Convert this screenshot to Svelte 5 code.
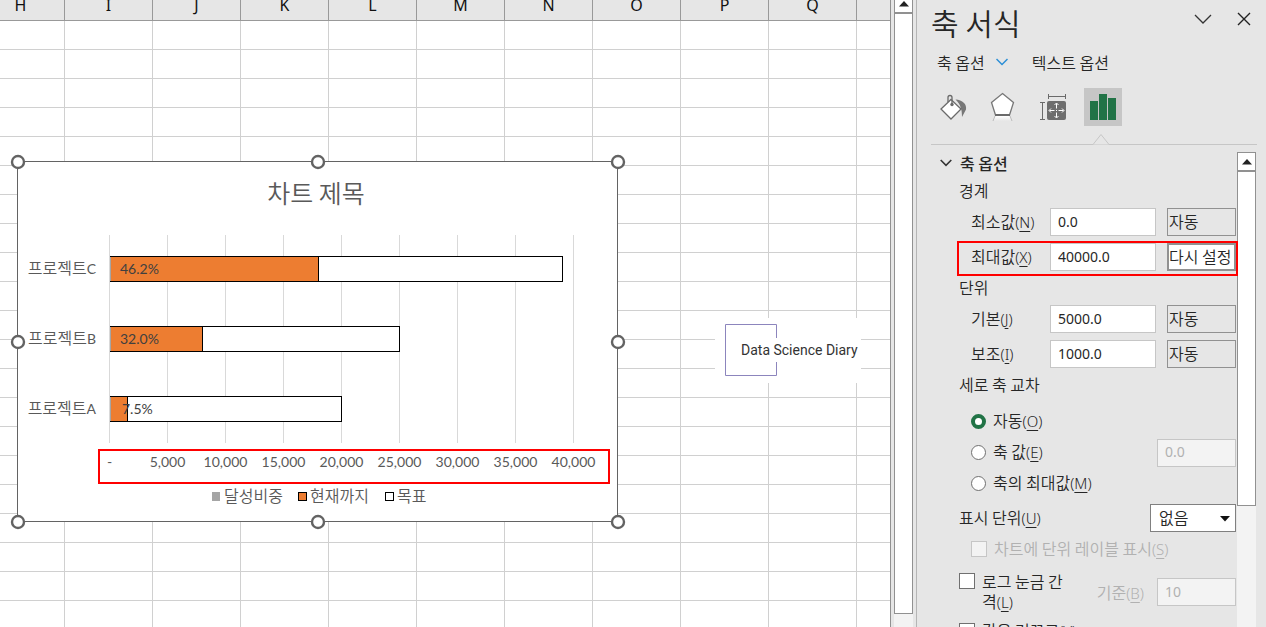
<script lang="ts">
  const columns = ['H', 'I', 'J', 'K', 'L', 'M', 'N', 'O', 'P', 'Q', 'R'];
  const rows = Array.from({ length: 24 }, (_, i) => i);

  // chart data
  const projects = [
    { name: 'C', goal: 39000, current: 18018, rate: '46.2%' },
    { name: 'B', goal: 25000, current: 8000, rate: '32.0%' },
    { name: 'A', goal: 20000, current: 1500, rate: '7.5%' },
  ];
  const ticks = [0, 5000, 10000, 15000, 20000, 25000, 30000, 35000, 40000];
  const handles = [[1, 1], [301, 1], [601, 1], [1, 181], [601, 181], [1, 361], [301, 361], [601, 361]];

  const scaleX = (value: number) => Math.round(92.2 + (value * 58) / 5000) + 0.5;

  let cross = $state('auto');
  let unit = $state('없음');
  let bounds = $state([
    { id: 'min', text: '최소값', key: 'N', value: '0.0', button: '자동' },
    { id: 'max', text: '최대값', key: 'X', value: '40000.0', button: '다시 설정' },
  ]);
  let units = $state([
    { id: 'major', text: '기본', key: 'J', value: '5000.0', button: '자동' },
    { id: 'minor', text: '보조', key: 'I', value: '1000.0', button: '자동' },
  ]);
</script>

{#snippet caption(text: string, key: string)}
  {text}<span class="key">(<u>{key}</u>)</span>
{/snippet}

{#snippet field(item)}
  <div class="field" class:marked={item.id === 'max'}>
    <label for={item.id}>{@render caption(item.text, item.key)}</label>
    <input class="box" id={item.id} type="text" bind:value={item.value}>
    <button class="reset" class:active={item.id === 'max'}>{item.button}</button>
  </div>
{/snippet}

{#snippet scrollUp()}
  <button class="scroll-up" aria-label="위로">
    <svg width="10" height="6" viewBox="0 0 10 6"><path d="M5 0L10 5.5H0z" fill="#222" /></svg>
  </button>
{/snippet}

<div class="app">
  <main class="sheet">
    <table>
      <thead>
        <tr>
          {#each columns as column}
            <th>{column}</th>
          {/each}
        </tr>
      </thead>
      <tbody>
        {#each rows as row (row)}
          <tr>
            {#each columns as column}
              <td></td>
            {/each}
          </tr>
        {/each}
      </tbody>
    </table>

    <svg class="chart" width="601" height="361" viewBox="0 0 601 361">
      <rect x="0.5" y="0.5" width="600" height="360" fill="#fff" stroke="#636363" />
      <text class="title" x="299" y="42">차트 제목</text>

      {#each ticks as tick}
        <path d="M{scaleX(tick)} 74V282" stroke="#d9d9d9" />
        <text class="tick" x={scaleX(tick)} y="306">{tick === 0 ? '-' : tick.toLocaleString('en-US')}</text>
      {/each}

      {#each projects as project, i}
        <text class="category" x="79" y={113 + i * 70}>프로젝트<tspan class="latin">{project.name}</tspan></text>
        <rect x="93.5" y={95.5 + i * 70} width={scaleX(project.goal) - 93.5} height="25" fill="#fff" stroke="#000" />
        <rect x="93.5" y={95.5 + i * 70} width={scaleX(project.current) - 93.5} height="25" fill="#ed7d31" stroke="#000" />
        <path d="M93.5 {96 + i * 70}v24" stroke="#a5a5a5" />
        <text class="rate" x={project.name === 'A' ? 105 : 103} y={113 + i * 70}>{project.rate}</text>
      {/each}

      <rect x="195" y="331" width="8" height="9" fill="#a5a5a5" />
      <text class="legend" x="207" y="341">달성비중</text>
      <rect x="281.5" y="331.5" width="8" height="8" fill="#ed7d31" stroke="#000" />
      <text class="legend" x="293" y="341">현재까지</text>
      <rect x="368.5" y="331.5" width="8" height="8" fill="#fff" stroke="#000" />
      <text class="legend" x="380" y="341">목표</text>

      <rect x="82" y="289" width="510" height="33" fill="none" stroke="#f00" stroke-width="2" />
      {#each handles as [x, y]}
        <circle cx={x} cy={y} r="6" fill="#fff" stroke="#636363" stroke-width="2.4" />
      {/each}
    </svg>

    <svg class="logo" width="146" height="65" viewBox="0 0 146 65">
      <rect width="146" height="65" fill="#fff" />
      <path d="M61.5 20V6.5H10.5V57.5H61.5V44" fill="none" stroke="#8c85bd" />
      <text x="26" y="37">Data Science Diary</text>
    </svg>
  </main>

  <div class="scrollbar sheet-scroll">
    {@render scrollUp()}
    <div class="thumb"></div>
  </div>

  <aside class="pane">
    <header>
      <h1>축 서식</h1>
      <button class="plain" aria-label="작업창 옵션">
        <svg width="18" height="10" viewBox="0 0 18 10"><path d="M1 1l8 8 8-8" fill="none" stroke="#333" stroke-width="1.3" /></svg>
      </button>
      <button class="plain" aria-label="닫기">
        <svg width="14" height="14" viewBox="0 0 14 14"><path d="M1 1l12 12M13 1L1 13" fill="none" stroke="#222" stroke-width="1.4" /></svg>
      </button>
    </header>

    <nav class="tabs">
      <button class="plain tab">
        축 옵션
        <svg width="12" height="8" viewBox="0 0 12 8"><path d="M0.5 1L6 6.5 11.5 1" fill="none" stroke="#2b8fd6" stroke-width="1.5" /></svg>
      </button>
      <button class="plain tab">텍스트 옵션</button>
    </nav>

    <div class="icons">
      <button class="plain icon" aria-label="채우기 및 선">
        <svg width="30" height="30" viewBox="0 0 30 30">
          <path d="M17.5 7.5C24.500 8 29 12 28 17.500L24 25C24 18 23 13 17.500 7.500z" fill="#777" />
          <path d="M13 7.500L23 17 13 27 3 17z" fill="#fff" stroke="#6a6a6a" stroke-width="1.3" />
          <path d="M10 10V5.500Q10 3.500 12 3.500T14 5.500V12" fill="none" stroke="#6a6a6a" stroke-width="1.3" />
          <circle cx="14" cy="12.500" r="1.700" fill="#6a6a6a" />
        </svg>
      </button>
      <button class="plain icon" aria-label="효과">
        <svg width="30" height="30" viewBox="0 0 30 30">
          <defs>
            <linearGradient id="fade" x1="0" y1="0" x2="0" y2="1">
              <stop offset="0" stop-color="#fff" />
              <stop offset="1" stop-color="#e6e6e6" />
            </linearGradient>
          </defs>
          <path d="M7 24h15l2 5H5z" fill="url(#fade)" />
          <path d="M7 24l-2 5M22 24l2 5" stroke="#bbb" />
          <path d="M14.500 1.500L25.500 10.500 21.500 23H7.500L3.500 10.500z" fill="#fff" stroke="#777" stroke-width="1.300" />
          <path d="M7 23h15" stroke="#6a6a6a" stroke-width="2" />
        </svg>
      </button>
      <button class="plain icon" aria-label="크기 및 속성">
        <svg width="30" height="30" viewBox="0 0 30 30">
          <path d="M10.500 2v5M27.500 2v5M10.500 4.500h17M2 10.500h5M2 27.500h5M4.500 10.500v17" fill="none" stroke="#6a6a6a" />
          <rect x="9" y="9" width="19" height="19" rx="2" fill="#6e6e6e" />
          <path d="M18.500 11.500v5M18.500 20.500v5M11.500 18.500h5M20.500 18.500h5M16.500 13l2-2 2 2M16.500 24l2 2 2-2M13 16.500l-2 2 2 2M24 16.500l2 2-2 2M18 18.500h1" fill="none" stroke="#fff" />
        </svg>
      </button>
      <button class="plain icon selected" aria-label="축 옵션">
        <svg width="26" height="26" viewBox="0 0 26 26" fill="#217346">
          <rect x="0" y="7" width="8" height="19" /><rect x="9" y="0" width="8" height="26" /><rect x="18" y="4" width="8" height="22" />
        </svg>
      </button>
    </div>

    <div class="divider">
      <svg width="18" height="12" viewBox="0 0 18 12"><path d="M0 11.500H1L9 1.500 17 11.500H18" fill="#e6e6e6" stroke="#c6c6c6" /></svg>
    </div>

    <div class="body">
      <section class="options">
        <h2>
          <svg width="12" height="8" viewBox="0 0 12 8"><path d="M0.700 1L6 6.300 11.300 1" fill="none" stroke="#333" stroke-width="1.600" /></svg>
          축 옵션
        </h2>

        <h3>경계</h3>
        <div class="fields">
          {#each bounds as item (item.id)}
            {@render field(item)}
          {/each}
        </div>

        <h3>단위</h3>
        <div class="fields">
          {#each units as item (item.id)}
            {@render field(item)}
          {/each}
        </div>

        <h3>세로 축 교차</h3>
        <div class="radios">
          <label class="choice">
            <input type="radio" name="cross" value="auto" bind:group={cross}>
            <span>{@render caption('자동', 'O')}</span>
          </label>
          <div class="split">
            <label class="choice">
              <input type="radio" name="cross" value="value" bind:group={cross}>
              <span>{@render caption('축 값', 'E')}</span>
            </label>
            <input class="box short" type="text" value="0.0" aria-label="축 값" disabled>
          </div>
          <label class="choice">
            <input type="radio" name="cross" value="max" bind:group={cross}>
            <span>{@render caption('축의 최대값', 'M')}</span>
          </label>
        </div>

        <div class="split unit">
          <label for="unit">{@render caption('표시 단위', 'U')}</label>
          <div class="select">
            <select id="unit" bind:value={unit}>
              <option>없음</option>
              <option>백</option>
              <option>천</option>
            </select>
            <svg width="10" height="6" viewBox="0 0 10 6"><path d="M0 0H10L5 5.500z" fill="#111" /></svg>
          </div>
        </div>
        <label class="choice unit-label">
          <input type="checkbox" disabled>
          <span>{@render caption('차트에 단위 레이블 표시', 'S')}</span>
        </label>

        <div class="split log">
          <label class="choice top">
            <input type="checkbox">
            <span>{@render caption('로그 눈금 간격', 'L')}</span>
          </label>
          <label class="base" for="base">{@render caption('기준', 'B')}</label>
          <input class="box short" id="base" type="text" value="10" disabled>
        </div>
        <label class="choice reverse">
          <input type="checkbox">
          <span>{@render caption('값을 거꾸로', 'V')}</span>
        </label>
      </section>

      <div class="scrollbar pane-scroll">
        {@render scrollUp()}
        <div class="thumb"></div>
      </div>
    </div>
  </aside>
</div>

<style>
  :global(body) {
    margin: 0;
    overflow: hidden;
  }

  .app {
    display: flex;
    height: 100vh;
    overflow: hidden;
    background: #e6e6e6;
    color: #262626;
    font-family: "Noto Sans CJK KR", sans-serif;
    font-size: 16px;
    font-weight: 350;
    line-height: 20px;
  }

  button, input, select {
    box-sizing: border-box;
    margin: 0;
    font: inherit;
    color: inherit;
  }

  /* Sheet */
  .sheet {
    position: relative;
    flex: 1;
    min-width: 0;
    overflow: hidden;
    border-right: 1px solid #919191;
    background: #fff;
  }

  table {
    width: 968px;
    margin-left: -23px;
    table-layout: fixed;
    border-collapse: separate;
    border-spacing: 0;
  }

  th, td {
    box-sizing: border-box;
    padding: 0;
    border-right: 1px solid #d0d0d0;
    border-bottom: 1px solid #d0d0d0;
  }

  th {
    height: 21px;
    padding-bottom: 9px;
    border-color: #999;
    background: #e6e6e6;
    color: #111;
    font-family: "Noto Sans", sans-serif;
    font-weight: 400;
    line-height: 11px;
  }

  td {
    height: 29px;
  }

  /* Chart and logo float over the cells */
  .chart {
    position: absolute;
    top: 161px;
    left: 17px;
    overflow: visible;
    fill: #595959;
  }

  .title {
    font-size: 25px;
    text-anchor: middle;
  }

  .category {
    text-anchor: end;
  }

  .tick, .rate, .latin {
    font-family: Lato, sans-serif;
    font-size: 14px;
    font-weight: 400;
  }

  .tick {
    text-anchor: middle;
  }

  .rate {
    fill: #404040;
  }

  .logo {
    position: absolute;
    top: 318px;
    left: 715px;
    font-family: Roboto, sans-serif;
    font-size: 14px;
    font-weight: 400;
    fill: #333;
  }

  /* Scrollbars */
  .scrollbar {
    display: flex;
    flex-direction: column;
    flex-shrink: 0;
    width: 19px;
    background: #f3f3f3;
  }

  .scroll-up {
    display: flex;
    align-items: center;
    justify-content: center;
    flex-shrink: 0;
    height: 19px;
    padding: 0;
    border: 1px solid #919191;
    background: #fff;
  }

  .thumb {
    box-sizing: border-box;
    border: 1px solid #919191;
    background: #fff;
  }

  .sheet-scroll {
    margin: -6px 3px 0;
  }

  .sheet-scroll .thumb {
    height: calc(100% - 32px);
  }

  .pane-scroll .thumb {
    height: 335px;
  }

  /* Task pane */
  .pane {
    display: flex;
    flex-direction: column;
    flex-shrink: 0;
    box-sizing: border-box;
    width: 350px;
    padding: 0 9px 0 14px;
    border-left: 1px solid #b5b5b5;
  }

  .plain {
    display: flex;
    align-items: center;
    padding: 0;
    border: none;
    background: none;
  }

  header {
    display: flex;
    gap: 25px;
    height: 46px;
    padding-right: 6px;
  }

  header .plain {
    height: 38px;
  }

  h1 {
    flex: 1;
    margin: 0;
    font-size: 30px;
    font-weight: 350;
    line-height: 44px;
  }

  .tabs {
    display: flex;
    gap: 24px;
    height: 32px;
    padding-left: 6px;
  }

  .tab {
    gap: 11px;
  }

  .icons {
    display: flex;
    gap: 12px;
    padding: 10px 0 0 3px;
  }

  .icon {
    justify-content: center;
    width: 38px;
    height: 38px;
  }

  .selected {
    background: #c6c6c6;
  }

  .divider {
    display: flex;
    align-items: flex-end;
    height: 18px;
    margin-bottom: 7px;
    padding-left: 161px;
    border-bottom: 1px solid #c6c6c6;
  }

  .divider svg {
    margin-bottom: -1px;
  }

  .body {
    display: flex;
    flex: 1;
    min-height: 0;
    padding-right: 1px;
  }

  .options {
    flex: 1;
    padding: 0 1px 0 28px;
  }

  h2, h3 {
    margin: 0;
    font-size: 16px;
  }

  h2 {
    display: flex;
    align-items: center;
    gap: 8px;
    height: 22px;
    margin-left: -19px;
    font-weight: 500;
    line-height: 18px;
  }

  h3 {
    margin: 3px 0;
    padding-bottom: 2px;
    font-weight: 350;
    line-height: 26px;
  }

  .key {
    font-family: "Noto Sans", sans-serif;
    font-size: 15px;
  }

  .key u {
    text-underline-offset: 3px;
  }

  .fields {
    display: flex;
    flex-direction: column;
    gap: 7px;
    padding-left: 12px;
  }

  .field {
    position: relative;
    display: flex;
    align-items: center;
  }

  .field label {
    flex: 1;
    white-space: nowrap;
  }

  .field label, .unit label, .choice span {
    padding-bottom: 2px;
  }

  /* red frame round the highlighted row */
  .marked::after {
    content: "";
    position: absolute;
    inset: -2px -2px -5px -14px;
    border: 2px solid #f00;
    pointer-events: none;
  }

  .box {
    width: 106px;
    height: 28px;
    padding: 0 7px 2px;
    border: 1px solid #c6c6c6;
    background: #fff;
    font-family: "Noto Sans", sans-serif;
    font-size: 14px;
    font-weight: 400;
  }

  .box:disabled {
    background: #f3f3f3;
    color: #b1b1b1;
  }

  .short {
    flex-shrink: 0;
    width: 79px;
  }

  .reset {
    width: 69px;
    height: 28px;
    margin-left: 11px;
    padding: 0 0 2px 1px;
    border: 1px solid #919191;
    background: none;
    text-align: left;
    white-space: nowrap;
  }

  .reset.active {
    padding-left: 0;
    border-width: 2px;
    background: #fff;
  }

  .split {
    display: flex;
    align-items: center;
    justify-content: space-between;
  }

  .choice {
    display: flex;
    align-items: center;
    gap: 7px;
  }

  .choice input {
    flex-shrink: 0;
    appearance: none;
    width: 16px;
    height: 16px;
    border: 1px solid #707070;
    background: #fff;
  }

  .choice input[type="radio"] {
    width: 15px;
    height: 15px;
    border-radius: 50%;
  }

  .choice input[type="radio"]:checked {
    border: 4px solid #217346;
  }

  .choice input:disabled {
    border-color: #c6c6c6;
    background: #f3f3f3;
  }

  .choice input:disabled + span, .base {
    color: #b1b1b1;
  }

  .radios {
    margin-top: 7px;
  }

  .radios .choice {
    height: 31px;
  }

  .radios .choice, .unit-label {
    padding-left: 12px;
  }

  .unit {
    margin-top: 5px;
  }

  .select {
    position: relative;
  }

  .select svg {
    position: absolute;
    top: 12px;
    right: 6px;
    pointer-events: none;
  }

  select {
    display: block;
    appearance: none;
    width: 86px;
    height: 28px;
    padding: 0 8px 2px;
    border: 1px solid #808080;
    border-radius: 0;
    background: #fff;
  }

  .unit-label {
    height: 34px;
  }

  .log {
    height: 52px;
  }

  .top {
    align-items: flex-start;
    width: 112px;
    word-break: break-all;
  }

  .top input {
    margin-top: 2px;
  }

  .base {
    margin-left: auto;
    margin-right: 13px;
  }

  .reverse {
    height: 26px;
  }
</style>
